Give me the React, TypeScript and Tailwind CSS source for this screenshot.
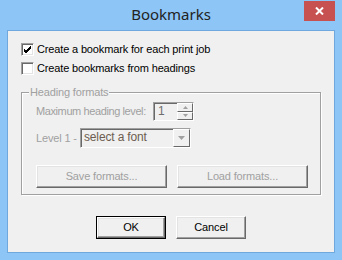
import React from "react";

const font = { fontFamily: '"Liberation Sans", Arial, sans-serif' };

function Check({ checked }: { checked?: boolean }) {
  return (
    <div className="w-[13px] h-[13px] shrink-0 bg-white border-t border-l border-[#a0a0a0] border-r-white border-b-white border-r border-b shadow-[inset_1px_1px_0_#696969,inset_-1px_-1px_0_#e3e3e3] flex items-center justify-center">
      {checked && (
        <svg width="9" height="9" viewBox="0 0 9 9">
          <path d="M1 4 L3 6 L8 1 M1 5 L3 7 L8 2 M1 6 L3 8 L8 3" stroke="#000" strokeWidth="1" fill="none" />
        </svg>
      )}
    </div>
  );
}

function Btn({ children, def, disabled, w }: { children: React.ReactNode; def?: boolean; disabled?: boolean; w: string }) {
  return (
    <div className={`${w} h-[23px] ${def ? "border border-black" : ""} flex`}>
      <div className="flex-1 bg-[#f0f0f0] border-t border-l border-white border-r border-b border-r-[#696969] border-b-[#696969] shadow-[inset_-1px_-1px_0_#a0a0a0,inset_1px_1px_0_#e3e3e3] flex items-center justify-center">
        <span className={`text-[11px] whitespace-nowrap ${disabled ? "text-[#a0a0a0]" : "text-black"}`}>{children}</span>
      </div>
    </div>
  );
}

export default function App() {
  return (
    <div className="w-[342px] h-[260px] bg-[#8cc5f6] flex flex-col px-[7px] pb-[7px]" style={font}>
      <div className="h-[30px] relative flex items-center justify-center">
        <span className="text-[15px] text-[#222] mt-[-1px]" style={{ fontFamily: '"Noto Sans", "Open Sans", sans-serif' }}>Bookmarks</span>
        <div className="absolute right-[0px] top-[1px] w-[31px] h-[20px] bg-[#c75050] flex items-center justify-center">
          <svg width="9" height="8" viewBox="0 0 9 8">
            <path d="M1 0.5 L8 7.5 M8 0.5 L1 7.5" stroke="#fff" strokeWidth="2" />
          </svg>
        </div>
      </div>
      <div className="flex-1 border border-[#6fa8dc] bg-[#f0f0f0] flex flex-col pl-[13px] pt-[12px] tracking-[-0.15px]">
        <div className="flex items-center gap-[3px] h-[13px]">
          <Check checked />
          <span className="text-[11px] text-black whitespace-nowrap">Create a bookmark for each print job</span>
        </div>
        <div className="flex items-center gap-[3px] h-[13px] mt-[6px]">
          <Check />
          <span className="text-[11px] text-black whitespace-nowrap">Create bookmarks from headings</span>
        </div>
        <div className="relative mt-[17px] w-[300px] h-[103px] border border-[#a0a0a0] shadow-[1px_1px_0_#fff,inset_1px_1px_0_#fff] flex flex-col pl-[14px] pt-[9px]">
          <span className="absolute left-[7px] top-[-7px] bg-[#f0f0f0] px-[1px] text-[11px] text-[#a0a0a0] leading-[13px] whitespace-nowrap">Heading formats</span>
          <div className="flex items-center h-[19px]">
            <span className="text-[11px] text-[#a0a0a0] w-[117px] shrink-0 whitespace-nowrap tracking-[-0.4px]">Maximum heading level:</span>
            <div className="w-[41px] h-[19px] shrink-0 border-t border-l border-[#a0a0a0] border-r-white border-b-white border-r border-b shadow-[inset_1px_1px_0_#696969] flex">
              <span className="flex-1 text-[12px] text-[#6d6d6d] pl-[4px] leading-[17px]">1</span>
              <div className="w-[16px] flex flex-col">
                <div className="flex-1 border-t border-l border-white border-r border-b border-r-[#696969] border-b-[#696969] flex items-center justify-center">
                  <svg width="5" height="3" viewBox="0 0 5 3"><path d="M2.5 0 L5 3 L0 3 Z" fill="#a0a0a0" /></svg>
                </div>
                <div className="flex-1 border-t border-l border-white border-r border-b border-r-[#696969] border-b-[#696969] flex items-center justify-center">
                  <svg width="5" height="3" viewBox="0 0 5 3"><path d="M0 0 L5 0 L2.5 3 Z" fill="#a0a0a0" /></svg>
                </div>
              </div>
            </div>
          </div>
          <div className="flex items-center h-[20px] mt-[7px]">
            <span className="text-[11px] text-[#a0a0a0] w-[44px] shrink-0 whitespace-nowrap">Level 1 -</span>
            <div className="w-[111px] h-[20px] shrink-0 border-t border-l border-[#a0a0a0] border-r-white border-b-white border-r border-b shadow-[inset_1px_1px_0_#696969] flex">
              <span className="flex-1 text-[12px] text-[#6d5d50] pl-[3px] leading-[17px] whitespace-nowrap">select a font</span>
              <div className="w-[17px] border-t border-l border-white border-r border-b border-r-[#696969] border-b-[#696969] flex items-center justify-center">
                <svg width="7" height="4" viewBox="0 0 7 4"><path d="M0 0 L7 0 L3.5 4 Z" fill="#a0a0a0" /></svg>
              </div>
            </div>
          </div>
          <div className="flex gap-[10px] mt-[17px]">
            <Btn w="w-[131px]" disabled>Save formats...</Btn>
            <Btn w="w-[131px]" disabled>Load formats...</Btn>
          </div>
        </div>
        <div className="flex gap-[10px] mt-[21px] ml-[75px]">
          <Btn w="w-[70px]" def>OK</Btn>
          <Btn w="w-[70px]">Cancel</Btn>
        </div>
      </div>
    </div>
  );
}
